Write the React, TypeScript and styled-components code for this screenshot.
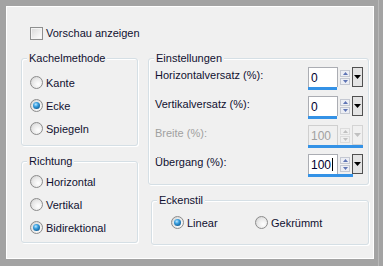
import React, { ReactElement } from 'react';
import styled, { createGlobalStyle } from 'styled-components';

const GlobalStyle = createGlobalStyle`
  html, body {
    margin: 0;
    padding: 0;
    background: #a0a0a0;
  }
  body {
    font-family: "Liberation Sans", Arial, sans-serif;
    font-size: 11px;
    color: #101030;
  }
`;

const Frame = styled.div`
  width: 383px;
  height: 266px;
  box-sizing: border-box;
  padding: 6px 9px 7px 6px;
  background: #a3a3a3;
  box-shadow: inset -4px 0 0 #a3a3a3, inset -5px 0 0 #b8b8b8;
`;

const Panel = styled.div`
  height: 100%;
  box-sizing: border-box;
  border: 1px solid #ffffff;
  background: #f0f0f0;
  padding: 19px 4px 0 14px;
`;

const CheckRow = styled.label`
  display: flex;
  align-items: center;
  height: 14px;
  padding-left: 9px;
  gap: 3px;
  line-height: 14px;
`;

const CheckBox = styled.span`
  width: 11px;
  height: 11px;
  border: 1px solid #8e8f8f;
  background: linear-gradient(135deg, #d8d8d8 0%, #f4f4f4 70%, #ffffff 100%);
  box-shadow: inset 0 0 0 1px #f4f4f4;
`;

const Columns = styled.div`
  display: flex;
  gap: 10px;
  margin-top: 18px;
`;

const Column = styled.div<{ $width: number }>`
  display: flex;
  flex-direction: column;
  gap: 15px;
  width: ${(p) => p.$width}px;
`;

const Group = styled.div<{ $height: number; $pad: string; $indent?: number }>`
  position: relative;
  box-sizing: border-box;
  height: ${(p) => p.$height}px;
  margin-left: ${(p) => p.$indent || 0}px;
  border: 1px solid #d5dfe5;
  border-radius: 3px;
  box-shadow: inset 1px 1px 0 #ffffff, 1px 1px 0 #ffffff;
  padding: ${(p) => p.$pad};
`;

const Legend = styled.span`
  position: absolute;
  top: -8px;
  left: 5px;
  padding: 0 2px;
  background: #f0f0f0;
  line-height: 14px;
`;

const RadioRow = styled.div<{ $width?: number }>`
  display: flex;
  align-items: center;
  height: 23px;
  gap: 3px;
  width: ${(p) => (p.$width ? `${p.$width}px` : 'auto')};
`;

const RadioLine = styled.div`
  display: flex;
  align-items: center;
  padding-left: 19px;
`;

const Radio = styled.span<{ $checked?: boolean }>`
  position: relative;
  width: 11px;
  height: 11px;
  border-radius: 50%;
  border: 1px solid #8c8c8c;
  background: radial-gradient(circle at 65% 65%, #ffffff 0%, #e8e8e8 55%, #c8c8c8 100%);

  &::after {
    content: '';
    display: ${(p) => (p.$checked ? 'block' : 'none')};
    position: absolute;
    left: 2px;
    top: 2px;
    width: 7px;
    height: 7px;
    border-radius: 50%;
    background: radial-gradient(circle at 40% 35%, #bfe8ff 0%, #3aa0e0 35%, #0f5a92 80%, #0a3c6a 100%);
  }
`;

const FieldRow = styled.div`
  display: flex;
  justify-content: space-between;
  align-items: flex-start;
  height: 29px;
`;

const FieldLabel = styled.span<{ $disabled?: boolean }>`
  margin-top: 3px;
  line-height: 14px;
  color: ${(p) => (p.$disabled ? '#a0a0a0' : '#101030')};
`;

const Spinner = styled.div`
  margin-top: 2px;
  width: 55px;
  display: flex;
  flex-direction: column;
`;

const SpinTop = styled.div`
  display: flex;
  height: 20px;
  align-items: stretch;
`;

const ValueBox = styled.div<{ $disabled?: boolean }>`
  box-sizing: border-box;
  width: 30px;
  border: 1px solid ${(p) => (p.$disabled ? '#cfcfcf' : '#abadb3')};
  border-bottom: none;
  background: ${(p) => (p.$disabled ? '#f0f0f0' : '#ffffff')};
  color: ${(p) => (p.$disabled ? '#a0a0a0' : '#000030')};
  padding: 3px 0 0 2px;
  line-height: 14px;
  font-size: 12px;
`;

const Caret = styled.span`
  display: inline-block;
  width: 1px;
  height: 13px;
  margin-left: 1px;
  vertical-align: -2px;
  background: #000000;
`;

const Arrows = styled.div`
  display: flex;
  flex-direction: column;
  justify-content: center;
  gap: 1px;
  width: 10px;
  margin-left: 2px;
`;

const ArrowButton = styled.span<{ $disabled?: boolean }>`
  height: 7px;
  box-sizing: border-box;
  border: 1px solid ${(p) => (p.$disabled ? '#dcdcdc' : '#c4c8d2')};
  background: ${(p) => (p.$disabled ? '#f0f0f0' : '#eceef4')};
  display: flex;
  align-items: center;
  justify-content: center;
`;

const DropButton = styled.span<{ $disabled?: boolean }>`
  box-sizing: border-box;
  width: 11px;
  margin-left: 2px;
  border: 1px solid ${(p) => (p.$disabled ? '#d4d4d4' : '#505050')};
  background: ${(p) => (p.$disabled ? '#f0f0f0' : '#e4e4e4')};
  display: flex;
  align-items: center;
  justify-content: center;
`;

const Bar = styled.div`
  height: 3px;
  background: #3492e6;
`;

type SpinProps = { value: string; fill: number; disabled?: boolean; caret?: boolean };

function Tri({ up, color }: { up?: boolean; color: string }): ReactElement {
  return (
    <svg width="5" height="3" viewBox="0 0 5 3">
      <polygon points={up ? '0,3 5,3 2.5,0' : '0,0 5,0 2.5,3'} fill={color} />
    </svg>
  );
}

function Spin({ value, fill, disabled, caret }: SpinProps): ReactElement {
  const arrowColor = disabled ? '#c0c0c0' : '#5e74b4';
  return (
    <Spinner>
      <SpinTop>
        <ValueBox $disabled={disabled}>
          {value}
          {caret && <Caret />}
        </ValueBox>
        <Arrows>
          <ArrowButton $disabled={disabled}>
            <Tri up color={arrowColor} />
          </ArrowButton>
          <ArrowButton $disabled={disabled}>
            <Tri color={arrowColor} />
          </ArrowButton>
        </Arrows>
        <DropButton $disabled={disabled}>
          <svg width="7" height="4" viewBox="0 0 7 4">
            <polygon points="0,0 7,0 3.5,4" fill={disabled ? '#c0c0c0' : '#000000'} />
          </svg>
        </DropButton>
      </SpinTop>
      <Bar style={{ width: fill }} />
    </Spinner>
  );
}

const rows = [
  { label: 'Horizontalversatz (%):', value: '0', fill: 29 },
  { label: 'Vertikalversatz (%):', value: '0', fill: 29 },
  { label: 'Breite (%):', value: '100', fill: 55, disabled: true },
  { label: 'Übergang (%):', value: '100', fill: 45, caret: true }
];

export default function App(): ReactElement {
  return (
    <>
      <GlobalStyle />
      <Frame>
        <Panel>
          <CheckRow>
            <CheckBox />
            Vorschau anzeigen
          </CheckRow>
          <Columns>
            <Column $width={117}>
              <Group $height={88} $pad="12px 0 0 8px">
                <Legend>Kachelmethode</Legend>
                <RadioRow><Radio />Kante</RadioRow>
                <RadioRow><Radio $checked />Ecke</RadioRow>
                <RadioRow><Radio />Spiegeln</RadioRow>
              </Group>
              <Group $height={82} $pad="8px 0 0 8px">
                <Legend>Richtung</Legend>
                <RadioRow><Radio />Horizontal</RadioRow>
                <RadioRow><Radio />Vertikal</RadioRow>
                <RadioRow><Radio $checked />Bidirektional</RadioRow>
              </Group>
            </Column>
            <Column $width={221}>
              <Group $height={127} $pad="6px 5px 0 6px">
                <Legend>Einstellungen</Legend>
                {rows.map((r) => (
                  <FieldRow key={r.label}>
                    <FieldLabel $disabled={r.disabled}>{r.label}</FieldLabel>
                    <Spin value={r.value} fill={r.fill} disabled={r.disabled} caret={r.caret} />
                  </FieldRow>
                ))}
              </Group>
              <Group $height={45} $pad="10px 0 0 0" $indent={3}>
                <Legend>Eckenstil</Legend>
                <RadioLine>
                  <RadioRow $width={84}><Radio $checked />Linear</RadioRow>
                  <RadioRow><Radio />Gekrümmt</RadioRow>
                </RadioLine>
              </Group>
            </Column>
          </Columns>
        </Panel>
      </Frame>
    </>
  );
}
